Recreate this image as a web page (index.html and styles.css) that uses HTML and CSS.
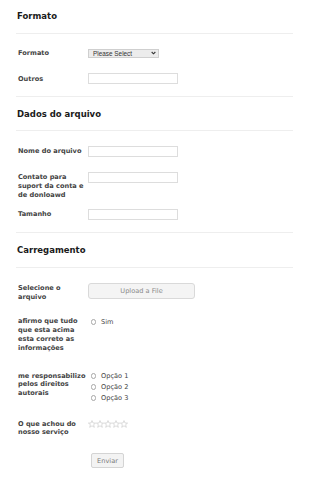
FILE: index.html
```html
<!DOCTYPE html>
<html lang="pt">
<head>
<meta charset="utf-8">
<title>Formulário</title>
<link rel="stylesheet" href="styles.css">
</head>
<body>
<form class="form">
  <section class="sec">
    <div class="sec-head"><h2>Formato</h2></div>
    <div class="rows">
      <div class="row">
        <label class="lbl lbl-flush">Formato</label>
        <div class="select-wrap">
          <select class="select"><option>Please Select</option></select>
          <svg class="chev" viewBox="0 0 6 4" width="5" height="4"><path d="M0.8 0.8 L3 3 L5.2 0.8" fill="none" stroke="#333" stroke-width="1.3"/></svg>
        </div>
      </div>
      <div class="row">
        <label class="lbl lbl-low">Outros</label>
        <input class="txt" type="text">
      </div>
    </div>
  </section>

  <section class="sec">
    <div class="sec-head"><h2>Dados do arquivo</h2></div>
    <div class="rows">
      <div class="row">
        <label class="lbl">Nome do arquivo</label>
        <input class="txt" type="text">
      </div>
      <div class="row">
        <label class="lbl">Contato para suport da conta e de donloawd</label>
        <input class="txt" type="text">
      </div>
      <div class="row row-close">
        <label class="lbl">Tamanho</label>
        <input class="txt" type="text">
      </div>
    </div>
  </section>

  <section class="sec">
    <div class="sec-head"><h2>Carregamento</h2></div>
    <div class="rows">
      <div class="row">
        <label class="lbl">Selecione o arquivo</label>
        <button type="button" class="upload">Upload a File</button>
      </div>
      <div class="row">
        <label class="lbl">afirmo que tudo que esta acima esta correto as informações</label>
        <div class="opts">
          <label class="opt"><span class="radio"></span>Sim</label>
        </div>
      </div>
      <div class="row row-wide">
        <label class="lbl">me responsabilizo pelos direitos autorais</label>
        <div class="opts">
          <label class="opt"><span class="radio"></span>Opção 1</label>
          <label class="opt"><span class="radio"></span>Opção 2</label>
          <label class="opt"><span class="radio"></span>Opção 3</label>
        </div>
      </div>
      <div class="row">
        <label class="lbl">O que achou do nosso serviço</label>
        <svg class="stars" viewBox="0 0 40 8" width="40" height="8">
          <g fill="none" stroke="#c4c4c4" stroke-width="0.6" stroke-linejoin="round">
            <polygon points="4,0.6 5,3 7.6,3.1 5.6,4.7 6.3,7.3 4,5.8 1.7,7.3 2.4,4.7 0.4,3.1 3,3"/>
            <polygon transform="translate(8 0)" points="4,0.6 5,3 7.6,3.1 5.6,4.7 6.3,7.3 4,5.8 1.7,7.3 2.4,4.7 0.4,3.1 3,3"/>
            <polygon transform="translate(16 0)" points="4,0.6 5,3 7.6,3.1 5.6,4.7 6.3,7.3 4,5.8 1.7,7.3 2.4,4.7 0.4,3.1 3,3"/>
            <polygon transform="translate(24 0)" points="4,0.6 5,3 7.6,3.1 5.6,4.7 6.3,7.3 4,5.8 1.7,7.3 2.4,4.7 0.4,3.1 3,3"/>
            <polygon transform="translate(32 0)" points="4,0.6 5,3 7.6,3.1 5.6,4.7 6.3,7.3 4,5.8 1.7,7.3 2.4,4.7 0.4,3.1 3,3"/>
          </g>
        </svg>
      </div>
      <div class="row row-submit">
        <button type="submit" class="send">Enviar</button>
      </div>
    </div>
  </section>
</form>
</body>
</html>
```
FILE: styles.css
```css
* { box-sizing: border-box; }

body {
  margin: 0;
  background: #fff;
  font-family: "DejaVu Sans", Verdana, sans-serif;
}

.form {
  padding: 11px 17px 0 16px;
}

.sec + .sec {
  border-top: 1px solid #eeeeee;
}

.sec-head {
  padding: 0 0 11.5px 1px;
  border-bottom: 1px solid #eeeeee;
}

.sec + .sec .sec-head {
  padding-top: 12px;
}

h2 {
  margin: 0;
  font-size: 8.5px;
  line-height: 10px;
  font-weight: bold;
  color: #1a1a1a;
}

.rows {
  display: flex;
  flex-direction: column;
  padding: 0 0 12px 2px;
}

.row {
  display: flex;
  align-items: flex-start;
  margin-top: 15px;
}

.row-close { margin-top: 10px; }
.row-wide { margin-top: 18px; }
.row-submit { margin-top: 16px; padding-left: 73px; }

.lbl {
  flex: none;
  width: 70px;
  padding-top: 1px;
  font-size: 6.6px;
  line-height: 8.8px;
  font-weight: bold;
  color: #444;
}

.lbl-flush { padding-top: 0; }
.lbl-low { padding-top: 2px; }

.txt {
  width: 90px;
  height: 11px;
  margin: 0;
  padding: 0 2px;
  border: 1px solid #dddddd;
  border-radius: 0;
  background: #fff;
  font: 6.6px "DejaVu Sans", sans-serif;
}

.select-wrap {
  position: relative;
  width: 71px;
  height: 9px;
}

.select {
  display: block;
  width: 100%;
  height: 100%;
  margin: 0;
  padding: 0 0 0 4px;
  border: 1px solid #cfcfcf;
  border-radius: 0;
  background: #ececec;
  color: #333;
  font: 6.4px/7px "Liberation Sans", Arial, sans-serif;
  -webkit-appearance: none;
  appearance: none;
}

.chev {
  position: absolute;
  right: 3px;
  top: 2.5px;
  pointer-events: none;
}

.upload {
  width: 107px;
  height: 16px;
  margin: 0;
  padding: 0;
  border: 1px solid #d9d9d9;
  border-radius: 3px;
  background: #f4f4f4;
  color: #8a8a8a;
  font: 6.6px "DejaVu Sans", sans-serif;
  text-align: center;
}

.opts {
  display: flex;
  flex-direction: column;
}

.opt {
  display: flex;
  align-items: center;
  height: 11px;
  padding-left: 2.5px;
  font-size: 6.6px;
  color: #444;
}

.radio {
  flex: none;
  width: 5.5px;
  height: 5.5px;
  margin-right: 5px;
  border: 0.6px solid #a8a8a8;
  border-radius: 50%;
  background: #fff;
}

.stars {
  display: block;
  margin-top: 1px;
}

.send {
  width: 33px;
  height: 15px;
  margin: 0;
  padding: 0;
  border: 1px solid #d4d4d4;
  border-radius: 2px;
  background: #f3f3f3;
  color: #7a7a7a;
  font: 6.6px "DejaVu Sans", sans-serif;
  text-align: center;
}
```
